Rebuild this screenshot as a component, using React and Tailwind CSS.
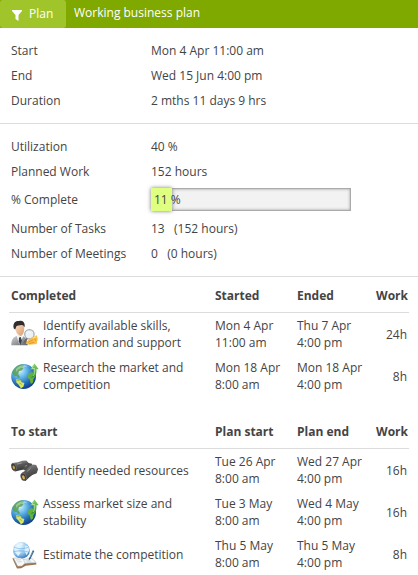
import React from "react";

function Person() {
  return (
    <svg viewBox="0 0 27 27" className="mb-px block h-[27px] w-[27px]">
      <defs>
        <linearGradient id="suit" x1="0" y1="0" x2="1" y2="1">
          <stop offset="0" stopColor="#d4d6d8" />
          <stop offset="1" stopColor="#5e6368" />
        </linearGradient>
        <linearGradient id="face" x1="0" y1="0" x2="1" y2="1">
          <stop offset="0" stopColor="#fbe0c8" />
          <stop offset="1" stopColor="#d9996c" />
        </linearGradient>
      </defs>
      <path d="M.3 25.3C.3 20 1.5 17.2 6 15.7l5.6.3c3 1 4.6 4 5.2 9.3Z" fill="url(#suit)" />
      <path d="m5.5 15.6 2.8 9 4-8.4-2.5-1.5Z" fill="#f4f5f6" />
      <path d="m8 17.4 1.7-.4 1.2 3.5-1.6 4.6-1.6-3.6Z" fill="#3c4045" />
      <path d="M4.3 6.1c1-3 6.8-3.6 8.7-.3.7 4.9-.3 8.9-3.3 10.3-3.3-.8-5.8-4.7-5.4-10Z" fill="url(#face)" />
      <path d="M2.8 8.5C1.4 3.3 4.2.6 8 .9c3.7-1 6.5 1.4 5.5 6.3-.9-1.6-1.6-2.4-2.7-2.3-2.7.5-4.3.2-5.4 1.4L4.2 9.6Z" fill="#302d2c" />
      <circle cx="18.4" cy="14.3" r="4.7" fill="#e9eff3" fillOpacity=".9" stroke="#aaaeb1" strokeWidth="1.3" />
      <path d="M16.2 13.8c.4-1.4 1.6-2 3-1.7" stroke="#fff" strokeWidth="1" fill="none" />
      <path d="m16 18.4-3.2 4.6" stroke="#666" strokeWidth="1.7" />
      <path d="M15.6 21.6 21 17.4l4.9-2.1.8 3.6-1.1 5.2-7.4.7-3.2-1Z" fill="#f9bd42" />
      <path d="m17.2 22.2 5-2.5m-4 3.9 5-1.3m.3-4.8 1.1 3.3" stroke="#dd8a20" strokeWidth=".7" />
      <path d="m21.8 18.2 3.4-1.4" stroke="#ffe28d" strokeWidth="1.2" />
    </svg>
  );
}

function Globe() {
  return (
    <svg viewBox="0 0 28 28" className="block h-7 w-7">
      <defs>
        <radialGradient id="sea" cx=".35" cy=".26" r=".78">
          <stop offset="0" stopColor="#d3f2ff" />
          <stop offset=".35" stopColor="#66b7e9" />
          <stop offset=".7" stopColor="#236fb8" />
          <stop offset="1" stopColor="#123b83" />
        </radialGradient>
        <linearGradient id="leaf" x1="0" y1="0" x2="0" y2="1">
          <stop offset="0" stopColor="#88cd71" />
          <stop offset="1" stopColor="#2e922e" />
        </linearGradient>
      </defs>
      <circle cx="12.6" cy="14.5" r="12.4" fill="url(#sea)" />
      <path d="M1.2 10.6C3 5.7 6.8 2.8 11.4 2.3l2 1.2-2.2 1.9 1.1 1.4-2.2 2-2 .3-1 2.8 1.9 3.4-1.6.8-2-2-2.8-.4Z" fill="#579e44" fillOpacity=".8" />
      <path d="m5.2 17.1 4.1.8 1.4 2.4 2.7.7-1 3.7-2.5 1.5-2.4-3.6-2.1-2.2Z" fill="#d8e566" />
      <path d="m5.6 18 2.9.7m-.2 2.2 2.5 1.6" stroke="#93b82b" strokeWidth=".9" />
      <path d="m17.4 12.3 2.8-2 3.1.2 1.3 3.4-2.2 3-.4 3.6-2.1 1.5-1.4-5.1-1.6-.8Z" fill="#65b13b" />
      <path d="M19 15.8c3.1-1.1 3.6-4.3 3-8.3h-3l4.5-6.1 4.2 5.9h-2.3c.6 5.4-1.3 8.6-6.4 8.5Z" fill="url(#leaf)" />
      <path d="m22.8 3.5-1.9 3h2.7c.4 3.1-.1 5.7-1.4 7.3" fill="none" stroke="#bce9a4" strokeWidth=".8" />
      <path d="M5 7.1c3-3.9 8-4.8 12-2.6C11.4 4.6 7.5 6.3 5 10Z" fill="#fff" fillOpacity=".35" />
    </svg>
  );
}

function Binoculars() {
  return (
    <svg viewBox="0 0 28 22" className="mt-[2px] block h-[22px] w-7">
      <defs>
        <linearGradient id="barrel" x1=".3" y1="0" x2=".6" y2="1">
          <stop offset="0" stopColor="#8b8b8b" />
          <stop offset=".4" stopColor="#5a5a5a" />
          <stop offset="1" stopColor="#303030" />
        </linearGradient>
      </defs>
      <path d="M1.4 3.1 7 2.3 11.2.8l4.2-.3 2.4 2.8-.5 4.5-4.5 1.6-4.7 1-4.1 1-2.8-2Z" fill="url(#barrel)" />
      <path d="m12.5 6 4.1-3.2 4.4 1 1 5-5.4 3.4-4-2.4Z" fill="#505050" />
      <path d="m10.5 13 4.8-3 2.6-3.1 4.1-2.5 3.2.7 1.9 4.1-1.4 4-4.4 1.7-3.2 2.5-3.6 3.5-3.8-1.2Z" fill="url(#barrel)" />
      <ellipse cx="2.8" cy="7" rx="2.4" ry="3.9" transform="rotate(-20 2.8 7)" fill="#3a3a3a" stroke="#858585" strokeWidth=".5" />
      <ellipse cx="2.8" cy="7.4" rx="1.1" ry="2" transform="rotate(-20 2.8 7.4)" fill="#c9a24c" />
      <ellipse cx="12.5" cy="16.9" rx="2.7" ry="4" transform="rotate(-20 12.5 16.9)" fill="#3a3a3a" stroke="#858585" strokeWidth=".5" />
      <ellipse cx="12.5" cy="17.4" rx="1.3" ry="2.2" transform="rotate(-20 12.5 17.4)" fill="#dbb155" />
      <path d="m6 4.1 5-1.2m5.1 8.6 3.5-3.2m-5.7-2 2.2-.9" stroke="#aaa" strokeWidth=".7" />
    </svg>
  );
}

function GlobeBook() {
  return (
    <svg viewBox="0 0 27 28" className="mt-[2px] block h-7 w-[27px]">
      <defs>
        <radialGradient id="ice" cx=".35" cy=".25" r=".75">
          <stop offset="0" stopColor="#eefaff" />
          <stop offset=".6" stopColor="#9bcdf2" />
          <stop offset="1" stopColor="#4181c1" />
        </radialGradient>
      </defs>
      <circle cx="10.4" cy="9.4" r="8.4" fill="url(#ice)" />
      <path d="m3.2 7 3-4.2 4.1-1.1 2.1 1.6-3.4 2.1.9 2.7-3 1 2.8 2.3-2.5 3.8-3-3.6Zm11-2.3 3.2.4.9 4.4-2.6 4.7-2.3-4.3Z" fill="#e4f5ff" fillOpacity=".9" />
      <path d="M2.6 5.8c4.5 2.5 10 2.5 15.3 0M2.1 11c5.1-1.8 10.8-1.5 16 .3" stroke="#579bd5" strokeWidth=".5" fill="none" />
      <path d="m1.3 17.3 1.8.2 4 6.4 3.8.4 2.8-2.1 11.5-.3.2 1.6-10.7 1.2-4.4 2.6-4.3.2Z" fill="#9a744c" />
      <path d="m2.5 17.1 7-.2 3.3 1.5 8-1 4.4 4-11.2.9-3.1 2.8-4.3.2Z" fill="#f7f8f8" stroke="#99a1aa" strokeWidth=".5" />
      <path d="m12.5 18.4 1.5 3.7M5 19l4.9-.2m-3.5 2.1 4.3-.2m3.8-.9h5.2m-3.8 1.2h4.6" stroke="#b5c2ce" strokeWidth=".6" />
      <path d="m18 17.4 3.8-8.1 1.5.6-3.9 8.1-1.7 1.5Z" fill="#24537f" />
      <path d="m19 16.4 3-6.1" stroke="#a7cee8" strokeWidth=".5" />
    </svg>
  );
}

function Field({ label, children }) {
  return (
    <div className="flex h-[25px] items-center">
      <div className="w-[140px]">{label}</div>
      <div className="whitespace-pre">{children}</div>
    </div>
  );
}

const columns = "grid grid-cols-[32px_172px_82px_70px_41px] items-center";

function TaskTable({ headings, rows }) {
  return (
    <section className="px-[9px]">
      <div className={`${columns} h-[33px] border-b border-[#dcdcdc] pb-px pl-[2px] font-bold`}>
        <div className="col-span-2">{headings[0]}</div>
        <div>{headings[1]}</div>
        <div>{headings[2]}</div>
        <div className="text-right">Work</div>
      </div>
      <div className="pb-px pl-[2px] leading-[17px]">
        {rows.map(([Icon, name, start, end, work]) => (
          <div key={name} className={`${columns} h-[42px]`}>
            <div><Icon /></div>
            <div className="whitespace-pre">{name}</div>
            <div className="whitespace-pre">{start}</div>
            <div className="whitespace-pre">{end}</div>
            <div className="pr-px text-right">{work}</div>
          </div>
        ))}
      </div>
    </section>
  );
}

const completed = [
  [Person, "Identify available skills,\ninformation and support", "Mon 4 Apr\n11:00 am", "Thu 7 Apr\n4:00 pm", "24h"],
  [Globe, "Research the market and\ncompetition", "Mon 18 Apr\n8:00 am", "Mon 18 Apr\n4:00 pm", "8h"],
];
const upcoming = [
  [Binoculars, "Identify needed resources", "Tue 26 Apr\n8:00 am", "Wed 27 Apr\n4:00 pm", "16h"],
  [Globe, "Assess market size and\nstability", "Tue 3 May\n8:00 am", "Wed 4 May\n4:00 pm", "16h"],
  [GlobeBook, "Estimate the competition", "Thu 5 May\n8:00 am", "Thu 5 May\n4:00 pm", "8h"],
];

export default function App() {
  return (
    <main className="h-[575px] w-[418px] overflow-hidden bg-white font-['Open_Sans','Noto_Sans',sans-serif] text-[12px] leading-[17px] text-[#444]">
      <header className="flex h-7 bg-[#80a900] text-white">
        <div className="flex w-[66px] items-start rounded-[3px] bg-[#9fc52b] pt-[5px] pl-3">
          <svg viewBox="0 0 10 11" className="mt-[5px] h-[11px] w-[10px]">
            <path d="M0 0h10v1L6.5 5v6L3.5 9V5L0 1Z" fill="white" />
          </svg>
          <span className="ml-[7px]">Plan</span>
        </div>
        <h1 className="ml-2 pt-1">Working business plan</h1>
      </header>
      <section className="h-24 border-b border-[#dcdcdc] pt-[10px] pl-[11px]">
        <Field label="Start">Mon 4 Apr 11:00 am</Field>
        <Field label="End">Wed 15 Jun 4:00 pm</Field>
        <Field label="Duration">2 mths 11 days 9 hrs</Field>
      </section>
      <section className="h-[153px] border-b border-[#dcdcdc] pt-[10px] pl-[11px]">
        <Field label="Utilization">40 %</Field>
        <Field label="Planned Work">152 hours</Field>
        <div className="mt-px mb-[2px] flex h-[29px] items-center">
          <div className="w-[140px]">% Complete</div>
          <div className="relative h-[23px] w-[200px] border border-[#aaa] bg-[#f2f2f2] shadow-[inset_0_0_3px_#999]">
            <div className="absolute -top-px -left-px h-[23px] w-[21px] bg-[#dfff80] shadow-[0_0_4px_#777]" />
            <span className="relative block pt-[2px] pl-[2px]">11 %</span>
          </div>
        </div>
        <Field label="Number of Tasks">{"13   (152 hours)"}</Field>
        <Field label="Number of Meetings">{"0   (0 hours)"}</Field>
      </section>
      <div className="h-[3px]" />
      <TaskTable headings={["Completed", "Started", "Ended"]} rows={completed} />
      <div className="h-[18px]" />
      <TaskTable headings={["To start", "Plan start", "Plan end"]} rows={upcoming} />
    </main>
  );
}
